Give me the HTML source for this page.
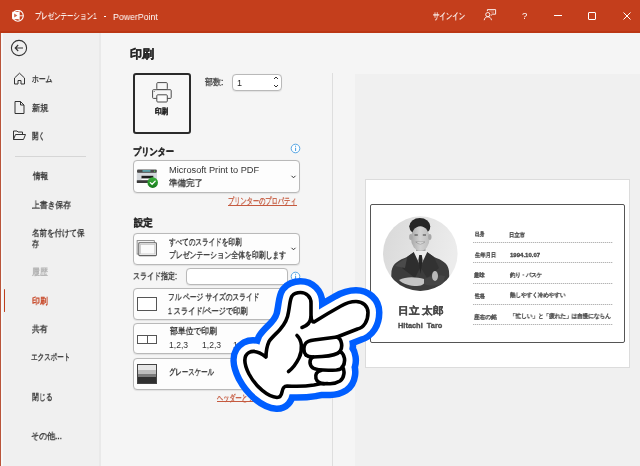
<!DOCTYPE html>
<html lang="ja">
<head>
<meta charset="utf-8">
<style>
*{margin:0;padding:0;box-sizing:border-box}
html,body{width:640px;height:466px;overflow:hidden;background:#f5f5f5;font-family:"Liberation Sans",sans-serif;color:#262626}
.a{position:absolute}
.tx{position:absolute;white-space:nowrap;line-height:1;transform-origin:0 0;will-change:transform}
.box{position:absolute;border:1px solid #b9b9b9;border-radius:4px;background:#fdfdfd;box-shadow:0 0.5px 1px rgba(0,0,0,0.08)}
</style>
</head>
<body>
<!-- title bar -->
<div class="a" style="left:0;top:0;width:640px;height:32px;background:#c43e1c"></div>
<div class="a" style="left:0;top:31px;width:640px;height:2px;background:#bb3714"></div>
<svg class="a" style="left:11px;top:10px" width="14" height="13" viewBox="0 0 14 13">
  <circle cx="6.9" cy="5.8" r="5.4" fill="none" stroke="#fff" stroke-width="1.1"/>
  <path d="M8.2 0.8 V10.5 M8.2 5.8 H12.3" stroke="#fff" stroke-width="0.9" fill="none"/>
  <rect x="1.2" y="1.8" width="7" height="7.4" fill="#fff"/>
  <path d="M3.2 3.6 L6.4 5.5 L3.2 7.6 Z" fill="#d0684c"/>
</svg>
<svg class="a" style="left:483px;top:9px" width="14" height="12" viewBox="0 0 14 12" fill="none" stroke="#fff" stroke-width="0.9">
  <path d="M4.4 2.2 V0.6 H12.6 V5.2 H9.6 L7.8 6.6"/>
  <path d="M6.2 2 H11 M8.2 3.8 H11" stroke-width="0.6" stroke="#e8b5a6"/>
  <circle cx="4.8" cy="5.6" r="2.1"/>
  <path d="M1.2 11.2 C1.6 8.7 3 7.8 4.8 7.8 C6.6 7.8 8 8.7 8.5 11.2"/>
</svg>
<div class="a" style="left:103.5px;top:16px;width:2.5px;height:1px;background:#fff"></div>
<div class="a" style="left:554px;top:15px;width:8px;height:1px;background:#fff"></div>
<div class="a" style="left:588px;top:12px;width:8px;height:8px;border:1px solid #fff;border-radius:1px"></div>
<svg class="a" style="left:622.5px;top:12px" width="8" height="8" viewBox="0 0 8 8" stroke="#fff" stroke-width="1"><path d="M0.5 0.5 L7.5 7.5 M7.5 0.5 L0.5 7.5"/></svg>

<!-- nav -->
<div class="a" style="left:0;top:33px;width:99px;height:433px;background:#f0f0f0"></div>
<div class="a" style="left:99px;top:33px;width:2px;height:433px;background:#e9e9e9"></div>
<div class="a" style="left:0;top:33px;width:1px;height:433px;background:#b9553a"></div><div class="a" style="left:1px;top:33px;width:2px;height:433px;background:#f7f8f8"></div>
<svg class="a" style="left:10px;top:39px" width="18" height="18" viewBox="0 0 18 18" fill="none" stroke="#333" stroke-width="1.1">
  <circle cx="9" cy="9" r="7.6"/>
  <path d="M13 9 H5.2 M8.2 6 L5.2 9 L8.2 12"/>
</svg>
<svg class="a" style="left:13px;top:72px" width="13" height="13" viewBox="0 0 13 13" fill="none" stroke="#333" stroke-width="1"><path d="M1.5 6 L6.5 1.2 L11.5 6 V12 H8 V8.5 H5 V12 H1.5 Z"/></svg>
<svg class="a" style="left:14px;top:101px" width="11" height="13" viewBox="0 0 11 13" fill="none" stroke="#333" stroke-width="1"><path d="M1 0.5 H6.5 L10 4 V12.5 H1 Z M6.5 0.5 V4 H10"/></svg>
<svg class="a" style="left:13px;top:130px" width="13" height="11" viewBox="0 0 13 11" fill="none" stroke="#333" stroke-width="1"><path d="M0.5 9.5 V1 H4 L5 2 H9.5 V4 M0.5 9.5 L2.5 4.5 H12.5 L10.5 9.5 Z"/></svg>
<div class="a" style="left:15px;top:156px;width:71px;height:1px;background:#d6d6d6"></div>
<div class="a" style="left:3.5px;top:289.3px;width:1.7px;height:22.3px;border-radius:1px;background:#bf3f1d"></div>

<!-- main -->
<div class="a" style="left:133px;top:73px;width:58px;height:61px;border:2px solid #2b2b2b;border-radius:3px;background:#f7f7f7"></div>
<svg class="a" style="left:150px;top:81px" width="23" height="23" viewBox="0 0 23 23" fill="none" stroke="#4a4a4a" stroke-width="1">
  <rect x="6.8" y="1.6" width="10.5" height="7" rx="1"/>
  <rect x="2.6" y="8.7" width="18.6" height="8.7" rx="0.8" fill="#f7f7f7"/>
  <rect x="6.8" y="13.8" width="10.5" height="7.2" rx="1" fill="#fbfbfb"/>
  <circle cx="4.2" cy="10.6" r="0.5" fill="#4a4a4a" stroke="none"/>
</svg>
<div class="box" style="left:232px;top:74px;width:50px;height:17px;background:#fff"></div>
<svg class="a" style="left:272px;top:75px" width="8" height="14" viewBox="0 0 8 14" fill="none" stroke="#333" stroke-width="1"><path d="M2 4 L4 2 L6 4 M2 10 L4 12 L6 10"/></svg>

<svg class="a" style="left:290px;top:143px" width="11" height="11" viewBox="0 0 11 11"><circle cx="5.5" cy="5.5" r="4.3" fill="#fff" stroke="#55a5e4" stroke-width="1"/><rect x="5" y="4.7" width="1.1" height="3.3" fill="#55a5e4"/><rect x="5" y="2.7" width="1.1" height="1.1" fill="#55a5e4"/></svg>
<div class="box" style="left:133px;top:160px;width:167px;height:33px"></div>
<svg class="a" style="left:136px;top:168px" width="24" height="22" viewBox="0 0 24 22">
  <defs><linearGradient id="gck" x1="0" y1="0" x2="0" y2="1"><stop offset="0" stop-color="#3db53d"/><stop offset="1" stop-color="#17781c"/></linearGradient></defs>
  <rect x="1" y="1.4" width="19.8" height="3.6" rx="1" fill="#4a4a4a"/>
  <rect x="6.5" y="2.3" width="8" height="1.3" fill="#63c6d2"/>
  <circle cx="18.6" cy="3.2" r="0.6" fill="#5d5"/>
  <rect x="0.8" y="4.8" width="20.2" height="8.6" fill="#d5d9dd"/>
  <rect x="5.5" y="7.8" width="11.8" height="2.8" fill="#1e1e1e"/>
  <rect x="5.5" y="10.6" width="11.8" height="1.6" fill="#fafafa"/>
  <rect x="0.8" y="12.2" width="20.2" height="2.8" rx="0.6" fill="#3a3a3a"/>
  <circle cx="16.7" cy="14.6" r="5.3" fill="url(#gck)"/>
  <path d="M14.3 14.6 L16.1 16.3 L19.2 13.1" stroke="#fff" stroke-width="1.3" fill="none" stroke-linecap="round"/>
</svg>
<svg class="a" style="left:290px;top:174px" width="7" height="6" viewBox="0 0 7 6" fill="none" stroke="#333" stroke-width="1"><path d="M1.5 1.8 L3.5 3.8 L5.5 1.8"/></svg>
<div class="a" style="left:227.5px;top:204.5px;width:69px;height:1px;background:#c55a3f"></div>

<div class="box" style="left:133px;top:232.5px;width:167px;height:32px"></div>
<svg class="a" style="left:136px;top:239px" width="22" height="19" viewBox="0 0 22 19" fill="none">
  <rect x="1.1" y="1.6" width="17.2" height="13.5" stroke="#7a7a7a" stroke-width="0.8" fill="#f2f2f2"/>
  <rect x="2.8" y="3.8" width="17.6" height="12.8" rx="0.8" stroke="#626262" stroke-width="1.1" fill="#fff"/>
  <rect x="4.4" y="5.4" width="14.4" height="9.6" stroke="#c4c4c4" stroke-width="0.8" fill="#fafafa"/>
</svg>
<svg class="a" style="left:290px;top:246px" width="7" height="6" viewBox="0 0 7 6" fill="none" stroke="#333" stroke-width="1"><path d="M1.5 1.8 L3.5 3.8 L5.5 1.8"/></svg>
<div class="box" style="left:186px;top:268px;width:102px;height:17px;background:#fff"></div>
<svg class="a" style="left:290px;top:271px" width="11" height="11" viewBox="0 0 11 11"><circle cx="5.5" cy="5.5" r="4.3" fill="#fff" stroke="#55a5e4" stroke-width="1"/><rect x="5" y="4.7" width="1.1" height="3.3" fill="#55a5e4"/><rect x="5" y="2.7" width="1.1" height="1.1" fill="#55a5e4"/></svg>

<div class="box" style="left:133px;top:288px;width:167px;height:31.5px"></div>
<div class="a" style="left:137px;top:297px;width:20px;height:14px;border:1px solid #555;background:#fff"></div>

<div class="box" style="left:133px;top:323px;width:167px;height:31px"></div>
<div class="a" style="left:137px;top:335px;width:11px;height:9px;border:1px solid #555;background:#fff"></div>
<div class="a" style="left:147px;top:335px;width:10px;height:9px;border:1px solid #555;background:#fff"></div>

<div class="box" style="left:133px;top:358px;width:167px;height:32px"></div>
<div class="a" style="left:137px;top:364px;width:20px;height:20px;border:1px solid #444;background:linear-gradient(#e6e6e6 0 28%,#bdbdbd 28% 48%,#7c7c7c 48% 66%,#303030 66%)"></div>
<div class="a" style="left:217px;top:401px;width:75px;height:1px;background:#c55a3f"></div>

<!-- divider + preview -->
<div class="a" style="left:332px;top:73px;width:1px;height:393px;background:#dedede"></div>
<div class="a" style="left:355px;top:74px;width:285px;height:392px;background:#f0f0f0"></div>
<div class="a" style="left:365px;top:179px;width:265px;height:189px;background:#fff;border:1px solid #dcdcdc"></div>
<div class="a" style="left:370px;top:203.5px;width:254.5px;height:139.5px;border:1.6px solid #555;border-radius:2px"></div>

<svg class="a" style="left:383px;top:216px" width="75" height="76" viewBox="0 0 75 76">
  <defs>
    <clipPath id="cc"><circle cx="37.3" cy="37.6" r="37.3"/></clipPath>
    <linearGradient id="bgg" x1="0" y1="0" x2="1" y2="0.3"><stop offset="0" stop-color="#d8d8d8"/><stop offset="1" stop-color="#ececec"/></linearGradient>
    <linearGradient id="fg" x1="0" y1="0" x2="1" y2="0"><stop offset="0" stop-color="#a8a8a8"/><stop offset="0.5" stop-color="#d2d2d2"/><stop offset="1" stop-color="#bdbdbd"/></linearGradient>
  </defs>
  <g clip-path="url(#cc)">
    <rect width="75" height="76" fill="url(#bgg)"/>
    <path d="M7.5 76 L8.5 55 C10 47 16 44 24 41 L31 36 L44 36 L51 41 C59 44 65 47 66 55 L67 76 Z" fill="#3c3c3c"/>
    <path d="M24 41 L31 36 L37 52 L32 62 L19 52 Z" fill="#2e2e2e"/>
    <path d="M51 41 L44 36 L38 52 L44 62 L56 52 Z" fill="#323232"/>
    <path d="M12 50 C16 46 20 44 24 42 L22 52 Z" fill="#4a4a4a"/>
    <path d="M30.5 35.5 L37.5 50 L44.5 35.5 L41 33 L34 33 Z" fill="#ececec"/>
    <path d="M36.2 39 L35.4 44 L37.5 58 L39.6 44 L38.8 39 Z" fill="#262626"/>
    <rect x="33" y="28" width="9.5" height="7" fill="#a4a4a4"/>
    <ellipse cx="36.8" cy="10.5" rx="10.5" ry="8.5" fill="#262626"/>
    <ellipse cx="37.3" cy="22.5" rx="9.3" ry="12.3" fill="url(#fg)"/>
    <path d="M28 13 C30 9.5 34 9 37.5 9.5 C41 9 45 10 46.8 13.5 L47 10 C45 5 40 3 36.5 3 C32 3 27.5 5.5 26.5 10.5 Z" fill="#262626"/>
    <ellipse cx="27.8" cy="21" rx="1.7" ry="3" fill="#a8a8a8"/>
    <ellipse cx="46.8" cy="21" rx="1.7" ry="3" fill="#a8a8a8"/>
    <path d="M31.5 19 H34.8 M39.8 19 H43" stroke="#3e3e3e" stroke-width="1.1"/>
    <path d="M32.8 26 Q37.3 30 41.8 26 Z" fill="#f2f2f2" stroke="#777" stroke-width="0.5"/>
    <path d="M16 64 C23 60 34 61 41 63 C43 67 40 70 34 70 C27 70 20 68 16 64 Z" fill="#c4c4c4"/>
    <path d="M41 63 C48 60 56 58 62 60 L60 68 C52 70 46 70 41 68 Z" fill="#454545"/>
    <ellipse cx="52" cy="60" rx="3" ry="5" fill="#b8b8b8"/>
  </g>
</svg>
<div class="a" style="left:473px;top:242px;width:140px;height:1px;background:repeating-linear-gradient(90deg,#b4b4b4 0 1px,#e8e8e8 1px 2px)"></div>
<div class="a" style="left:473px;top:262px;width:140px;height:1px;background:repeating-linear-gradient(90deg,#b4b4b4 0 1px,#e8e8e8 1px 2px)"></div>
<div class="a" style="left:473px;top:283px;width:140px;height:1px;background:repeating-linear-gradient(90deg,#b4b4b4 0 1px,#e8e8e8 1px 2px)"></div>
<div class="a" style="left:473px;top:304px;width:140px;height:1px;background:repeating-linear-gradient(90deg,#b4b4b4 0 1px,#e8e8e8 1px 2px)"></div>
<div class="a" style="left:473px;top:324px;width:140px;height:1px;background:repeating-linear-gradient(90deg,#b4b4b4 0 1px,#e8e8e8 1px 2px)"></div>

<div class="tx" style="left:34.55px;top:11.05px;font-size:8.50px;font-weight:normal;color:#ffffff;transform:scaleX(0.710);-webkit-text-stroke:0.15px #ffffff;/*thin*/">プレゼンテーシ<span style="font-size:10px">ョ</span>ン1</div>
<div class="tx" style="left:112.55px;top:12.62px;font-size:9.00px;font-weight:normal;color:#ffffff;transform:scaleX(0.974);-webkit-text-stroke:0px #ffffff;/*ns*/">PowerPoint</div>
<div class="tx" style="left:433.00px;top:11.65px;font-size:8.50px;font-weight:normal;color:#ffffff;transform:scaleX(0.716);-webkit-text-stroke:0.15px #ffffff;/*thin*/">サインイン</div>
<div class="tx" style="left:521.60px;top:11.15px;font-size:9.50px;font-weight:normal;color:#ffffff;transform:scaleX(1.000);-webkit-text-stroke:0px #ffffff;/*ns noscale*/">?</div>
<div class="tx" style="left:31.55px;top:75.05px;font-size:8.50px;font-weight:normal;color:#333333;transform:scaleX(0.752);-webkit-text-stroke:0.32px #333333;">ホーム</div>
<div class="tx" style="left:31.90px;top:103.85px;font-size:8.50px;font-weight:normal;color:#333333;transform:scaleX(0.911);-webkit-text-stroke:0.32px #333333;">新規</div>
<div class="tx" style="left:32.30px;top:132.15px;font-size:8.50px;font-weight:normal;color:#333333;transform:scaleX(0.713);-webkit-text-stroke:0.32px #333333;">開く</div>
<div class="tx" style="left:32.80px;top:172.20px;font-size:8.50px;font-weight:normal;color:#333333;transform:scaleX(0.843);-webkit-text-stroke:0.32px #333333;">情報</div>
<div class="tx" style="left:31.80px;top:200.55px;font-size:8.50px;font-weight:normal;color:#333333;transform:scaleX(0.867);-webkit-text-stroke:0.32px #333333;">上書き保存</div>
<div class="tx" style="left:32.00px;top:229.45px;font-size:8.50px;font-weight:normal;color:#333333;transform:scaleX(0.832);-webkit-text-stroke:0.32px #333333;">名前を付けて保</div>
<div class="tx" style="left:32.00px;top:240.35px;font-size:8.50px;font-weight:normal;color:#333333;transform:scaleX(0.781);-webkit-text-stroke:0.32px #333333;">存</div>
<div class="tx" style="left:31.70px;top:268.15px;font-size:8.50px;font-weight:normal;color:#b0b0b0;transform:scaleX(0.874);-webkit-text-stroke:0.32px #b0b0b0;">履歴</div>
<div class="tx" style="left:32.10px;top:296.85px;font-size:8.50px;font-weight:normal;color:#c43e1c;transform:scaleX(0.876);-webkit-text-stroke:0.32px #c43e1c;">印刷</div>
<div class="tx" style="left:32.10px;top:325.25px;font-size:8.50px;font-weight:normal;color:#333333;transform:scaleX(0.867);-webkit-text-stroke:0.32px #333333;">共有</div>
<div class="tx" style="left:31.30px;top:352.85px;font-size:8.50px;font-weight:normal;color:#333333;transform:scaleX(0.728);-webkit-text-stroke:0.32px #333333;">エクスポート</div>
<div class="tx" style="left:31.70px;top:393.30px;font-size:8.50px;font-weight:normal;color:#333333;transform:scaleX(0.770);-webkit-text-stroke:0.32px #333333;">閉じる</div>
<div class="tx" style="left:31.30px;top:432.30px;font-size:8.50px;font-weight:normal;color:#333333;transform:scaleX(0.900);-webkit-text-stroke:0.32px #333333;">その他...</div>
<div class="tx" style="left:130.20px;top:48.65px;font-size:11.50px;font-weight:bold;color:#262626;transform:scaleX(1.008);-webkit-text-stroke:0.3px #262626;">印刷</div>
<div class="tx" style="left:155.20px;top:107.50px;font-size:7.80px;font-weight:bold;color:#262626;transform:scaleX(0.813);-webkit-text-stroke:0.3px #262626;">印刷</div>
<div class="tx" style="left:204.60px;top:78.15px;font-size:8.50px;font-weight:normal;color:#444444;transform:scaleX(0.896);-webkit-text-stroke:0.32px #444444;">部数:</div>
<div class="tx" style="left:237.40px;top:79.10px;font-size:9.00px;font-weight:normal;color:#262626;transform:scaleX(1.000);-webkit-text-stroke:0px #262626;/*ns noscale*/">1</div>
<div class="tx" style="left:133.00px;top:146.75px;font-size:10.00px;font-weight:bold;color:#262626;transform:scaleX(0.820);-webkit-text-stroke:0.3px #262626;">プリンター</div>
<div class="tx" style="left:168.90px;top:165.70px;font-size:8.50px;font-weight:normal;color:#333333;transform:scaleX(1.084);-webkit-text-stroke:0px #333333;/*ns*/">Microsoft Print to PDF</div>
<div class="tx" style="left:168.90px;top:179.40px;font-size:8.50px;font-weight:normal;color:#333333;transform:scaleX(0.943);-webkit-text-stroke:0.32px #333333;">準備完了</div>
<div class="tx" style="left:227.55px;top:196.70px;font-size:8.50px;font-weight:normal;color:#c55a3f;transform:scaleX(0.692);-webkit-text-stroke:0.32px #c55a3f;">プリンターのプロパティ</div>
<div class="tx" style="left:134.30px;top:218.25px;font-size:10.00px;font-weight:bold;color:#262626;transform:scaleX(0.934);-webkit-text-stroke:0.3px #262626;">設定</div>
<div class="tx" style="left:169.05px;top:237.60px;font-size:8.50px;font-weight:normal;color:#333333;transform:scaleX(0.733);-webkit-text-stroke:0.32px #333333;">すべてのスライドを印刷</div>
<div class="tx" style="left:169.05px;top:250.30px;font-size:8.50px;font-weight:normal;color:#333333;transform:scaleX(0.760);-webkit-text-stroke:0.32px #333333;">プレゼンテーシ<span style="font-size:10px">ョ</span>ン全体を印刷します</div>
<div class="tx" style="left:132.80px;top:272.40px;font-size:8.50px;font-weight:normal;color:#333333;transform:scaleX(0.779);-webkit-text-stroke:0.32px #333333;">スライド指定:</div>
<div class="tx" style="left:168.40px;top:292.95px;font-size:8.50px;font-weight:normal;color:#333333;transform:scaleX(0.749);-webkit-text-stroke:0.32px #333333;">フル ページ サイズのスライド</div>
<div class="tx" style="left:168.40px;top:307.35px;font-size:8.50px;font-weight:normal;color:#333333;transform:scaleX(0.804);-webkit-text-stroke:0.32px #333333;">1 スライド/ページで印刷</div>
<div class="tx" style="left:170.00px;top:327.40px;font-size:8.50px;font-weight:normal;color:#333333;transform:scaleX(0.871);-webkit-text-stroke:0.32px #333333;">部単位で印刷</div>
<div class="tx" style="left:169.40px;top:341.45px;font-size:8.50px;font-weight:normal;color:#333333;transform:scaleX(1.011);-webkit-text-stroke:0px #333333;/*ns*/">1,2,3</div>
<div class="tx" style="left:201.80px;top:341.45px;font-size:8.50px;font-weight:normal;color:#333333;transform:scaleX(1.011);-webkit-text-stroke:0px #333333;/*ns*/">1,2,3</div>
<div class="tx" style="left:233.40px;top:341.45px;font-size:8.50px;font-weight:normal;color:#333333;transform:scaleX(1.011);-webkit-text-stroke:0px #333333;/*ns*/">1,2,3</div>
<div class="tx" style="left:168.70px;top:368.15px;font-size:8.50px;font-weight:normal;color:#333333;transform:scaleX(0.713);-webkit-text-stroke:0.32px #333333;">グレースケール</div>
<div class="tx" style="left:217.30px;top:393.70px;font-size:8.50px;font-weight:normal;color:#c55a3f;transform:scaleX(0.683);-webkit-text-stroke:0.32px #c55a3f;">ヘッダーとフッターの編集</div>
<div class="tx" style="left:397.90px;top:306.15px;font-size:9.80px;font-weight:bold;color:#4a4a4a;transform:scaleX(1.060);-webkit-text-stroke:0.3px #4a4a4a;">日立 太郎</div>
<div class="tx" style="left:398.40px;top:323.40px;font-size:6.50px;font-weight:bold;color:#4a4a4a;transform:scaleX(1.140);-webkit-text-stroke:0.3px #4a4a4a;">Hitachi&nbsp;&nbsp;Taro</div>
<div class="tx" style="left:474.90px;top:231.40px;font-size:6.00px;font-weight:bold;color:#555555;transform:scaleX(0.783);-webkit-text-stroke:0.1px #555555;">出身</div>
<div class="tx" style="left:509.30px;top:231.90px;font-size:6.00px;font-weight:bold;color:#555555;transform:scaleX(0.890);-webkit-text-stroke:0.1px #555555;">日立市</div>
<div class="tx" style="left:474.90px;top:252.00px;font-size:6.00px;font-weight:bold;color:#555555;transform:scaleX(0.884);-webkit-text-stroke:0.1px #555555;">生年月日</div>
<div class="tx" style="left:509.55px;top:252.00px;font-size:6.00px;font-weight:bold;color:#444444;transform:scaleX(1.003);-webkit-text-stroke:0.3px #444444;">1994.10.07</div>
<div class="tx" style="left:473.90px;top:272.30px;font-size:6.00px;font-weight:bold;color:#555555;transform:scaleX(0.893);-webkit-text-stroke:0.1px #555555;">趣味</div>
<div class="tx" style="left:510.30px;top:272.30px;font-size:6.00px;font-weight:bold;color:#555555;transform:scaleX(0.887);-webkit-text-stroke:0.1px #555555;">釣り・バスケ</div>
<div class="tx" style="left:474.90px;top:293.25px;font-size:6.00px;font-weight:bold;color:#555555;transform:scaleX(0.819);-webkit-text-stroke:0.1px #555555;">性格</div>
<div class="tx" style="left:509.90px;top:292.45px;font-size:6.00px;font-weight:bold;color:#555555;transform:scaleX(0.925);-webkit-text-stroke:0.1px #555555;">熱しやすく冷めやすい</div>
<div class="tx" style="left:473.50px;top:313.85px;font-size:6.00px;font-weight:bold;color:#555555;transform:scaleX(0.945);-webkit-text-stroke:0.1px #555555;">座右の銘</div>
<div class="tx" style="left:509.70px;top:313.35px;font-size:6.00px;font-weight:bold;color:#555555;transform:scaleX(0.933);-webkit-text-stroke:0.1px #555555;">「忙しい」と「疲れた」は自慢にならん</div>

<!-- hand -->
<svg class="a" style="left:0;top:0" width="640" height="466" viewBox="0 0 640 466">
  
  <g stroke-linejoin="round" stroke-linecap="round">
    <path d="M300.5 292.5 C306.5 292.5 311 297 311 303 L311 317 Q311.5 322 314 322 C322 317 332 311 341 306 C346 303 351 301.5 356 301.5 C363 301.5 368 306 368 312.5 C368 321 364 327.5 357.5 329 L337 337 C342 339 343 347 340 351.5 C345 354 346 362 342.5 367 C345 370 344.5 378 340 381 C336 383.5 331 384 327 383.5 C322 383.5 318 384 314 385 C305 386.5 295 386.5 287 386 C284 386 282.5 389 282 392 Q281 397.5 277 397.5 C268 397 256 387 249 374 C244 364 243 356 249 352.5 C254 350 261 353 266 357 C266 351 267 346 269 341.5 C272 337 277 333 280 329.5 C284 325 287.5 320 288.5 312 C290 304 290 299 292 296 C294 293.5 297 292.5 300.5 292.5 Z" fill="#005eff" stroke="#005eff" stroke-width="29"/>
    <path d="M300.5 292.5 C306.5 292.5 311 297 311 303 L311 317 Q311.5 322 314 322 C322 317 332 311 341 306 C346 303 351 301.5 356 301.5 C363 301.5 368 306 368 312.5 C368 321 364 327.5 357.5 329 L337 337 C342 339 343 347 340 351.5 C345 354 346 362 342.5 367 C345 370 344.5 378 340 381 C336 383.5 331 384 327 383.5 C322 383.5 318 384 314 385 C305 386.5 295 386.5 287 386 C284 386 282.5 389 282 392 Q281 397.5 277 397.5 C268 397 256 387 249 374 C244 364 243 356 249 352.5 C254 350 261 353 266 357 C266 351 267 346 269 341.5 C272 337 277 333 280 329.5 C284 325 287.5 320 288.5 312 C290 304 290 299 292 296 C294 293.5 297 292.5 300.5 292.5 Z" fill="#fff" stroke="#fff" stroke-width="16"/>
  </g>
  <g fill="none" stroke="#000" stroke-width="3.6" stroke-linejoin="round" stroke-linecap="round">
    <path d="M300.5 292.5 C306.5 292.5 311 297 311 303 L311 317 Q311.5 322 314 322 C322 317 332 311 341 306 C346 303 351 301.5 356 301.5 C363 301.5 368 306 368 312.5 C368 321 364 327.5 357.5 329 L337 337 C342 339 343 347 340 351.5 C345 354 346 362 342.5 367 C345 370 344.5 378 340 381 C336 383.5 331 384 327 383.5 C322 383.5 318 384 314 385 C305 386.5 295 386.5 287 386 C284 386 282.5 389 282 392 Q281 397.5 277 397.5 C268 397 256 387 249 374 C244 364 243 356 249 352.5 C254 350 261 353 266 357 C266 351 267 346 269 341.5 C272 337 277 333 280 329.5 C284 325 287.5 320 288.5 312 C290 304 290 299 292 296 C294 293.5 297 292.5 300.5 292.5 Z"/>
    <path d="M311 317 C310.5 322 307 326 302 327.5"/>
    <path d="M297 335.5 C302 340 303 350 299 358 C296 364 292 369 288.5 371.5"/>
    <path d="M306 355 C303 352 303.5 346 305.5 343.5 C307 341.5 310 340.5 314 340 L337 337"/>
    <path d="M340 351.5 C337 355 330 356 322 356.5 L313 357 C310 357 307.5 356.5 306 355"/>
    <path d="M313 357 C309 359 309 365 313 368 C316 370 325 370.5 336.5 370 C341 369.5 342 368 342 367"/>
    <path d="M321 370.5 C316.5 371.5 315 374.5 316 378.5 C317 381.5 320 383.5 324 383.6"/>
  </g>
</svg>
</body>
</html>
